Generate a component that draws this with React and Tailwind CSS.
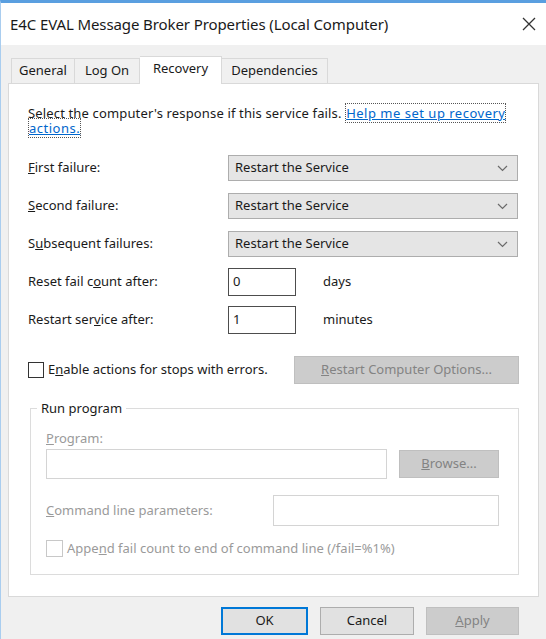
import React from "react";

const font = { fontFamily: '"Noto Sans", "Open Sans", Arial, sans-serif' };

function Chevron() {
  return (
    <svg width="11" height="7" viewBox="0 0 11 7" fill="none">
      <path d="M1 1l4.5 4.5L10 1" stroke="#6b6b6b" strokeWidth="1.2" />
    </svg>
  );
}

function Select({ value }) {
  return (
    <div className="w-[290px] h-[26px] flex items-center justify-between pl-[6px] pr-[9px] bg-[#e5e5e5] border border-[#adadad] text-[13px] text-[#1a1a1a]">
      <span>{value}</span>
      <Chevron />
    </div>
  );
}

function Row({ label, children }) {
  return (
    <div className="flex items-center h-[26px]">
      <div className="w-[200px] text-[13px] text-[#1a1a1a]">{label}</div>
      {children}
    </div>
  );
}

function Box({ value, unit }) {
  return (
    <div className="flex items-center">
      <div className="w-[68px] h-[28px] flex items-center px-[4px] bg-white border border-[#4d4d4d] text-[13px] text-[#1a1a1a]">
        {value}
      </div>
      <span className="ml-[27px] text-[13px] text-[#1a1a1a]">{unit}</span>
    </div>
  );
}

export default function App() {
  return (
    <div
      className="w-[546px] h-[639px] bg-[#f0f0f0] border-t-[3px] border-t-[#5a9fe0] border-l border-l-[#a9cdef] flex flex-col overflow-hidden"
      style={font}
    >
      {/* Title bar */}
      <div className="h-[42px] bg-white flex items-center justify-between pl-[9px] pr-[10px]">
        <span className="text-[15px] text-[#1a1a1a] tracking-[-0.1px]">
          E4C EVAL Message Broker Properties (Local Computer)
        </span>
        <svg width="14" height="14" viewBox="0 0 14 14">
          <path d="M1 1l12 12M13 1L1 13" stroke="#333" strokeWidth="1.3" />
        </svg>
      </div>

      <div className="px-[7px] pt-[10px] flex flex-col">
        {/* Tabs */}
        <div className="flex items-end h-[28px] pl-[3px] text-[13px] text-[#1a1a1a] relative z-10">
          <div className="w-[64px] h-[25px] flex items-center justify-center bg-[#f0f0f0] border border-[#d9d9d9] border-b-0">General</div>
          <div className="w-[65px] h-[25px] flex items-center justify-center bg-[#f0f0f0] border border-[#d9d9d9] border-b-0 border-l-0">Log On</div>
          <div className="w-[82px] h-[28px] pb-[3px] flex items-center justify-center bg-white border border-[#d9d9d9] border-b-0 -mb-px border-l-0">Recovery</div>
          <div className="w-[106px] h-[25px] flex items-center justify-center bg-[#f0f0f0] border border-[#d9d9d9] border-b-0 border-l-0">Dependencies</div>
        </div>

        {/* Panel */}
        <div className="h-[514px] bg-white border border-[#d9d9d9] pl-[19px] pr-[19px] pt-[22px] flex flex-col">
          <p className="text-[13px] leading-[15px] text-[#1a1a1a] tracking-[0.15px]">
            Select the computer's response if this service fails.{" "}
            <span className="text-[#0066cc] underline border border-dotted border-[#555] [box-decoration-break:clone] tracking-[0.5px]">
              Help me set up recovery actions.
            </span>
          </p>

          <div className="mt-[19px] flex flex-col gap-[12px]">
            <Row label={<><u>F</u>irst failure:</>}>
              <Select value="Restart the Service" />
            </Row>
            <Row label={<><u>S</u>econd failure:</>}>
              <Select value="Restart the Service" />
            </Row>
            <Row label={<>S<u>u</u>bsequent failures:</>}>
              <Select value="Restart the Service" />
            </Row>
          </div>

          <div className="mt-[11px] flex flex-col gap-[10px]">
            <div className="flex items-center h-[28px]">
              <div className="w-[200px] text-[13px] text-[#1a1a1a]">Reset fail c<u>o</u>unt after:</div>
              <Box value="0" unit="days" />
            </div>
            <div className="flex items-center h-[28px]">
              <div className="w-[200px] text-[13px] text-[#1a1a1a]">Restart ser<u>v</u>ice after:</div>
              <Box value="1" unit="minutes" />
            </div>
          </div>

          <div className="mt-[22px] flex items-center justify-between h-[28px]">
            <div className="flex items-center gap-[4px] text-[13px] text-[#1a1a1a]">
              <div className="w-[16px] h-[16px] border border-[#333] bg-white" />
              <span>E<u>n</u>able actions for stops with errors.</span>
            </div>
            <div className="w-[225px] h-[28px] flex items-center justify-center bg-[#cccccc] border border-[#bfbfbf] text-[13px] text-[#838383]">
              <span><u>R</u>estart Computer Options...</span>
            </div>
          </div>

          {/* Group box */}
          <div className="mt-[24px] ml-[2px] h-[167px] border border-[#dcdcdc] relative pl-[15px] pr-[19px] pt-[20px] flex flex-col">
            <span className="absolute -top-[10px] left-[6px] px-[4px] bg-white text-[13px] text-[#1a1a1a]">Run program</span>
            <div className="text-[13px] leading-[18px] text-[#9a9a9a]"><u>P</u>rogram:</div>
            <div className="mt-[2px] flex items-center justify-between">
              <div className="w-[341px] h-[30px] bg-white border border-[#d4d4d4]" />
              <div className="w-[100px] h-[28px] flex items-center justify-center bg-[#cccccc] border border-[#bfbfbf] text-[13px] text-[#838383]">
                <span><u>B</u>rowse...</span>
              </div>
            </div>
            <div className="mt-[16px] flex items-center justify-between">
              <div className="text-[13px] text-[#9a9a9a]"><u>C</u>ommand line parameters:</div>
              <div className="w-[226px] h-[31px] bg-white border border-[#d4d4d4]" />
            </div>
            <div className="mt-[13px] flex items-center gap-[4px] text-[13px] leading-[18px] text-[#9a9a9a]">
              <div className="w-[17px] h-[17px] border border-[#c8c8c8] bg-white" />
              <span>Appe<u>n</u>d fail count to end of command line (/fail=%1%)</span>
            </div>
          </div>
        </div>

        {/* Buttons */}
        <div className="mt-[10px] flex justify-end gap-[12px] pr-[20px] text-[13px]">
          <div className="w-[87px] h-[28px] flex items-center justify-center bg-[#e1e1e1] border-2 border-[#0078d7] text-[#1a1a1a]">OK</div>
          <div className="w-[94px] h-[28px] flex items-center justify-center bg-[#e1e1e1] border border-[#adadad] text-[#1a1a1a]">Cancel</div>
          <div className="w-[93px] h-[28px] flex items-center justify-center bg-[#cccccc] border border-[#bfbfbf] text-[#838383]">
            <span><u>A</u>pply</span>
          </div>
        </div>
      </div>
    </div>
  );
}
